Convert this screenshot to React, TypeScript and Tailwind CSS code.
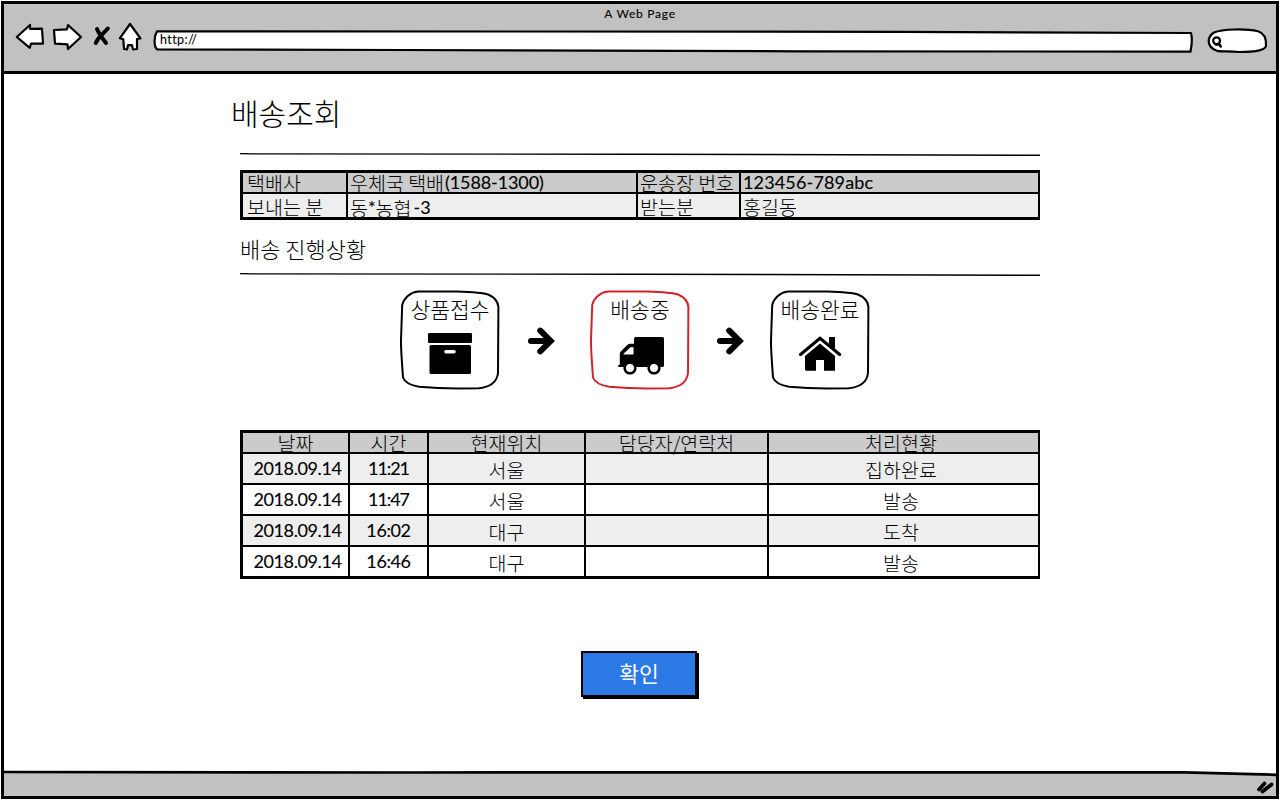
import type { ReactNode } from "react";

const INFO_ROWS = [
  {
    bg: "bg-[#cbcbcb]",
    cells: [
      <Ko key="a">택배사</Ko>,
      <span key="b" className="flex items-center"><Ko>우체국 택배</Ko><La className="pl-px tracking-[-0.1px]">(1588-1300)</La></span>,
      <Ko key="c">운송장 번호</Ko>,
      <La key="d" className="tracking-[0.15px]">123456-789abc</La>,
    ],
  },
  {
    bg: "bg-[#eeeeee]",
    cells: [
      <Ko key="a">보내는 분</Ko>,
      <span key="b" className="flex items-center"><Ko>동</Ko><La>*</La><Ko>농협</Ko><La className="pl-[2px]">-3</La></span>,
      <Ko key="c">받는분</Ko>,
      <Ko key="d">홍길동</Ko>,
    ],
  },
];

const HISTORY = [
  { date: "2018.09.14", time: "11:21", place: "서울", status: "집하완료" },
  { date: "2018.09.14", time: "11:47", place: "서울", status: "발송" },
  { date: "2018.09.14", time: "16:02", place: "대구", status: "도착" },
  { date: "2018.09.14", time: "16:46", place: "대구", status: "발송" },
];

function Ko({ children, className = "text-[19.5px]" }: { children: ReactNode; className?: string }) {
  return (
    <span className={`font-['Noto_Sans_CJK_KR',sans-serif] leading-[19px] font-light whitespace-pre ${className}`}>
      {children}
    </span>
  );
}

function La({ children, className = "" }: { children: ReactNode; className?: string }) {
  return (
    <span className={`font-[Lato,sans-serif] text-[18px] leading-[19px] font-normal whitespace-pre [-webkit-text-stroke:0.12px_#000] ${className}`}>
      {children}
    </span>
  );
}

function Rule() {
  return (
    <svg className="block h-[3px] w-[800px]" viewBox="0 0 800 3" fill="none">
      <path d="M0 0.6L12 0.9L400 1.2L800 2.3" stroke="#000" strokeWidth="1.4" />
    </svg>
  );
}

function StepBox({ label, color, children }: { label: string; color: string; children: ReactNode }) {
  return (
    <div className="relative h-[100px] w-[100px]">
      <svg className="absolute inset-0 h-full w-full" viewBox="0 0 100 100" fill="none">
        <path
          d="M18 1.6L57 1.5C71 2 82 2.4 88 4.5C94 7 98 11 98.4 17L98 83C97 92 90 97 79 98.2L58 98.6C43 98.5 30 97.8 19 96.8C12 95.5 5 93 3 87.5C2 72 0.8 60 1 50L2.2 15C4 8 10 2.5 18 1.6Z"
          stroke={color}
          strokeWidth="2"
          strokeLinejoin="round"
        />
      </svg>
      <div className="flex h-full flex-col items-center pt-[9px]">
        <Ko className="text-[21.5px]">{label}</Ko>
        {children}
      </div>
    </div>
  );
}

function Arrow() {
  return (
    <svg className="mt-[36px] block h-[30px] w-[27px]" viewBox="0 0 27 30" fill="none">
      <path d="M3 15H22" stroke="#000" strokeWidth="6" strokeLinecap="round" />
      <path d="M12.3 4.600L22.700 15L12.300 25.400" stroke="#000" strokeWidth="6" strokeLinecap="round" />
    </svg>
  );
}

function BrowserBar() {
  return (
    <header className="h-[70px] border-b-[3px] border-black bg-[#c1c1c1]">
      <div className="flex h-[18px] items-center justify-center pt-px font-[Lato,sans-serif] text-[12px] tracking-[0.75px] [-webkit-text-stroke:0.1px_#000]">
        A Web Page
      </div>
      <div className="flex pl-[10px]">
        <svg className="block h-[32px] w-[130px]" viewBox="14 22 130 32" fill="#fff" stroke="#000" strokeWidth="2.2" strokeLinejoin="round" strokeLinecap="round">
          <path d="M16.8 37L30 25L30 28.8L42 28.7L43 43.6L31 43.5L29.8 47.8Z" />
          <path d="M54 30L67 29.3L68 25L81 37L68 49L67.5 44.3L55 43.7Z" />
          <path d="M97 29C99 34 103 39 106 43M107.800 28.500C103 34 98 37 95.800 43" strokeWidth="4" fill="none" />
          <path d="M130 24L140.5 38.3L137 39L137 49L133 49.3L132 45.2H128L127 49.3L124 49L123.3 39.3L119.8 38.3Z" />
        </svg>
        <div className="relative ml-[9px] h-[32px] w-[1040px]">
          <svg className="absolute inset-0 h-full w-full" viewBox="153 22 1040 32" fill="#fff">
            <path d="M157 31.300L500 31.5L900 31.8L1191 33C1192.5 38 1192 44 1190.5 51.7L800 51.3L400 50L157 49.3C153.5 46 154 36 157 31.300Z" stroke="#000" strokeWidth="2.2" strokeLinejoin="round" />
          </svg>
          <span className="relative block pt-[10px] pl-[7px] font-[Lato,sans-serif] text-[12.5px] leading-[16px] tracking-[0.4px] [-webkit-text-stroke:0.1px_#000]">http://</span>
        </div>
        <svg className="ml-[14px] block h-[32px] w-[62px]" viewBox="1207 22 62 32" fill="#fff" stroke="#000" strokeLinejoin="round" strokeLinecap="round">
          <path d="M1214 32.500C1222 29 1246 28.5 1258 31.2C1264 33 1266.5 38 1266 46C1265 51 1249 52 1239 52C1229 51 1222 51.7 1217 50.8C1206 47 1207 37 1214 32.500Z" strokeWidth="2.2" />
          <circle cx="1216.6" cy="40.8" r="3.4" strokeWidth="2.2" />
          <path d="M1216 44.5H1219.5L1220.8 46.5" strokeWidth="2.4" fill="none" />
        </svg>
      </div>
    </header>
  );
}

function InfoTable() {
  return (
    <div className="h-[50px] border-[3px] border-r-[2px] border-black">
      {INFO_ROWS.map((row, r) => (
        <div
          key={r}
          className={`grid grid-cols-[105px_290px_103px_1fr] ${row.bg} ${r === 0 ? "h-[21px] border-b-2 border-black" : "h-[23px]"}`}
        >
          {row.cells.map((cell, c) => (
            <div
              key={c}
              className={`flex ${r === 0 ? "" : "pt-[3px]"} ${c === 0 ? "pl-[4px]" : "pl-[2px]"} ${c < 3 ? "border-r-2 border-black" : ""}`}
            >
              {cell}
            </div>
          ))}
        </div>
      ))}
    </div>
  );
}

function HistoryTable() {
  const cols = "grid grid-cols-[107px_79px_157px_183px_1fr]";
  const cell = "flex justify-center border-r-2 border-black last:border-r-0 last:pr-[5px]";
  return (
    <div className="h-[149px] border-[3px] border-r-[2px] border-black">
      <div className={`${cols} h-[21px] border-b-2 border-black bg-[#cbcbcb]`}>
        {["날짜", "시간", "현재위치", "담당자/연락처", "처리현황"].map((h) => (
          <div key={h} className={cell}>
            <Ko>{h}</Ko>
          </div>
        ))}
      </div>
      {HISTORY.map((row, i) => (
        <div key={i} className={`${cols} ${i < 3 ? "h-[31px] border-b-2 border-black" : "h-[29px]"} ${i % 2 === 0 ? "bg-[#eeeeee]" : "bg-white"}`}>
          <div className={`${cell} pt-[5px] pl-[4px]`}>
            <La className="tracking-[-0.4px]">{row.date}</La>
          </div>
          <div className={`${cell} pt-[5px]`}>
            <La className={row.time.startsWith("11") ? "tracking-[-1.1px]" : "tracking-[-0.4px]"}>{row.time}</La>
          </div>
          <div className={`${cell} pt-[6px]`}>
            <Ko>{row.place}</Ko>
          </div>
          <div className={cell} />
          <div className={`${cell} pt-[6px]`}>
            <Ko>{row.status}</Ko>
          </div>
        </div>
      ))}
    </div>
  );
}

export default function App() {
  return (
    <div className="h-[800px] w-[1280px] overflow-hidden bg-white p-px text-black">
      <div className="flex h-[798px] flex-col border-[3px] border-black">
        <BrowserBar />
        <main className="flex h-[697px] flex-col items-center">
          <div className="w-[800px]">
            <h1 className="-ml-[9px] h-[79px] pt-[18px] font-['Noto_Sans_CJK_KR',sans-serif] text-[30px] leading-[40px] font-light">배송조회</h1>
            <Rule />
            <div className="mt-[14px]">
              <InfoTable />
            </div>
            <h2 className="h-[53px] pt-[13px] font-['Noto_Sans_CJK_KR',sans-serif] text-[22px] leading-[30px] font-light">배송 진행상황</h2>
            <Rule />
            <div className="mt-[14px] flex h-[101px] items-start pl-[160px]">
              <StepBox label="상품접수" color="#000">
                <svg className="mt-[14px] block h-[44px] w-[46px]" viewBox="427 332 46 44">
                  <rect x="428" y="333" width="44" height="10" rx="1.2" />
                  <path fillRule="evenodd" d="M431 345H469.500Q471 345 471 346.500V372.500Q471 374 469.500 374H431Q429.500 374 429.500 372.500V346.500Q429.500 345 431 345ZM446 350A1.800 1.800 0 0 0 446 353.600H454A1.800 1.800 0 0 0 454 350Z" />
                </svg>
              </StepBox>
              <div className="ml-[28px]"><Arrow /></div>
              <div className="ml-[35px]">
                <StepBox label="배송중" color="#d0242c">
                  <svg className="mt-[14px] ml-[2px] block h-[44px] w-[48px]" viewBox="617 332 48 44">
                    <path fillRule="evenodd" d="M635.500 337H662.500Q664 337 664 338.500V365.500Q664 367 662.500 367H619.500Q618 367 618 366Q618 364.800 619.800 364.800V354Q619.800 352.500 621 351.300L627.500 344.800Q628.700 343.700 630.500 343.700H634V338.500Q634 337 635.500 337ZM633.500 347.300H630.500L623.500 353.800V354.500H633.500Z" />
                    <circle cx="630" cy="368" r="5.300" fill="#fff" stroke="#000" strokeWidth="2.600" />
                    <circle cx="654" cy="368" r="5.300" fill="#fff" stroke="#000" strokeWidth="2.600" />
                  </svg>
                </StepBox>
              </div>
              <div className="ml-[27px]"><Arrow /></div>
              <div className="ml-[26px]">
                <StepBox label="배송완료" color="#000">
                  <svg className="mt-[14px] block h-[44px] w-[46px]" viewBox="797 332 46 44">
                    <path d="M800.500 354.500L820 338.300L839.700 354.500" fill="none" stroke="#000" strokeWidth="3" strokeLinecap="round" />
                    <path d="M829 337H835V351L829 346Z" />
                    <path d="M820 343.500L835 356V370.800H824V360H816V370.800H806.500Q805 370.800 805 369.300V356Z" />
                  </svg>
                </StepBox>
              </div>
            </div>
            <div className="mt-[39px]">
              <HistoryTable />
            </div>
            <div className="flex justify-center pt-[72px] pr-[2px]">
              <button className="flex h-[46px] w-[116px] items-center justify-center border-2 border-black bg-[#2c78e4] pb-px font-['Noto_Sans_CJK_KR',sans-serif] text-[21.5px] text-white shadow-[2px_2px_0_0_#000]">
                확인
              </button>
            </div>
          </div>
        </main>
        <footer className="relative h-[25px] bg-[#c1c1c1]">
          <svg className="absolute -top-[2px] left-0 h-[8px] w-full" viewBox="0 0 1272 8">
            <path d="M0 0H1272V5.800L1190 3.300L0 3.300Z" fill="#fff" />
            <path d="M0 3L400 3.500L1180 3.300L1272 5.800" fill="none" stroke="#000" strokeWidth="2.700" />
          </svg>
          <svg className="absolute top-[8px] right-[2px] h-[17px] w-[18px]" viewBox="1257 779 18 17" fill="none" stroke="#000" strokeLinecap="round">
            <path d="M1260 789.500L1265.500 783.500M1263.500 791.500L1272.500 784.500" strokeWidth="3.700" />
          </svg>
        </footer>
      </div>
    </div>
  );
}
